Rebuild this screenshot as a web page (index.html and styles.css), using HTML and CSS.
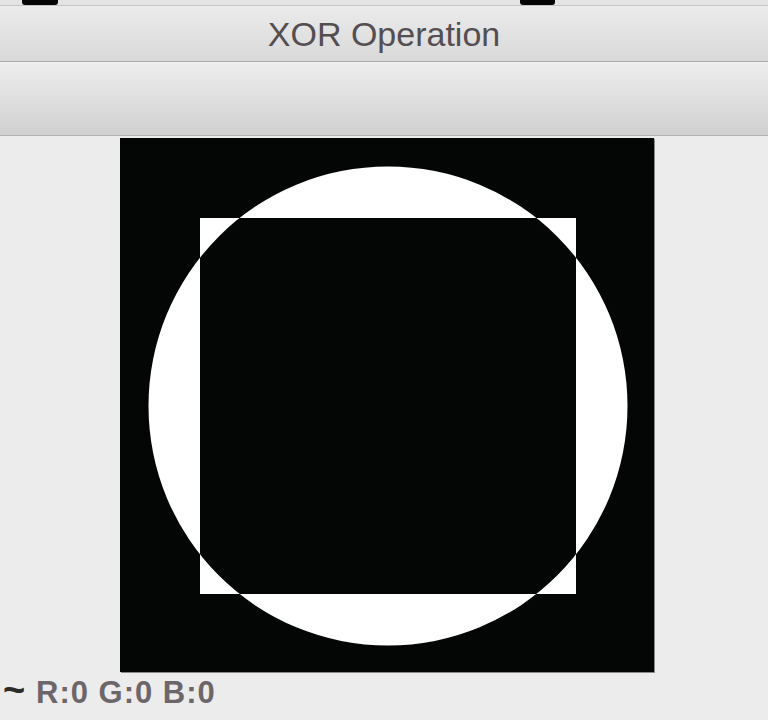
FILE: index.html
```html
<!DOCTYPE html>
<html>
<head>
<meta charset="utf-8">
<link rel="stylesheet" href="styles.css">
</head>
<body>
<div class="window">
  <div class="topstrip">
    <span class="tab tab-a"></span>
    <span class="tab tab-b"></span>
  </div>
  <div class="titlebar">XOR Operation</div>
  <div class="toolbar"></div>
  <div class="content">
    <svg class="canvas" width="534" height="534" viewBox="0 0 534 534">
      <rect x="0" y="0" width="534" height="534" fill="#040606"/>
      <path fill="#ffffff" fill-rule="evenodd" d="M80 80 H456 V456 H80 Z M28.5 268 A239.5 239.5 0 1 0 507.5 268 A239.5 239.5 0 1 0 28.5 268 Z"/>
    </svg>
  </div>
  <div class="status"><span class="tilde">~</span><span class="rgb">R:0 G:0 B:0</span></div>
</div>
</body>
</html>
```

FILE: styles.css
```css
html, body {
  margin: 0;
  padding: 0;
  background: #ececec;
}
.window {
  width: 768px;
  height: 720px;
  overflow: hidden;
  background: #ececec;
  font-family: "Liberation Sans", Arial, sans-serif;
}
.topstrip {
  height: 5px;
  background: #e4e4e4;
  border-bottom: 1px solid #c4c4c4;
  display: flex;
}
.tab {
  display: block;
  height: 5px;
  background: #050505;
  border-radius: 0 0 3px 3px;
}
.tab-a {
  width: 36px;
  margin-left: 22px;
}
.tab-b {
  width: 35px;
  margin-left: 462px;
}
.titlebar {
  height: 53px;
  padding-top: 2px;
  line-height: 53px;
  text-align: center;
  font-size: 34px;
  color: #544e52;
  background: linear-gradient(#ebebeb, #d9d9d9);
  border-bottom: 1px solid #a9a9a9;
}
.toolbar {
  height: 72px;
  background: linear-gradient(#ededed 0%, #e2e2e2 40%, #d0d0d0 100%);
  border-top: 1px solid #f4f4f4;
  border-bottom: 1px solid #b0b0b0;
}
.content {
  padding-top: 2px;
  padding-left: 120px;
  height: 534px;
}
.canvas {
  display: block;
  box-shadow: 1px 1px 0 #8a8a8a;
}
.status {
  margin-top: 0;
  padding-left: 3px;
  display: flex;
  align-items: baseline;
  font-size: 31px;
  line-height: 36px;
  font-weight: bold;
  color: #6c666a;
  white-space: nowrap;
}
.tilde {
  color: #2c2c2c;
  font-size: 38px;
  width: 33px;
}
.rgb {
  letter-spacing: 1px;
}
```
